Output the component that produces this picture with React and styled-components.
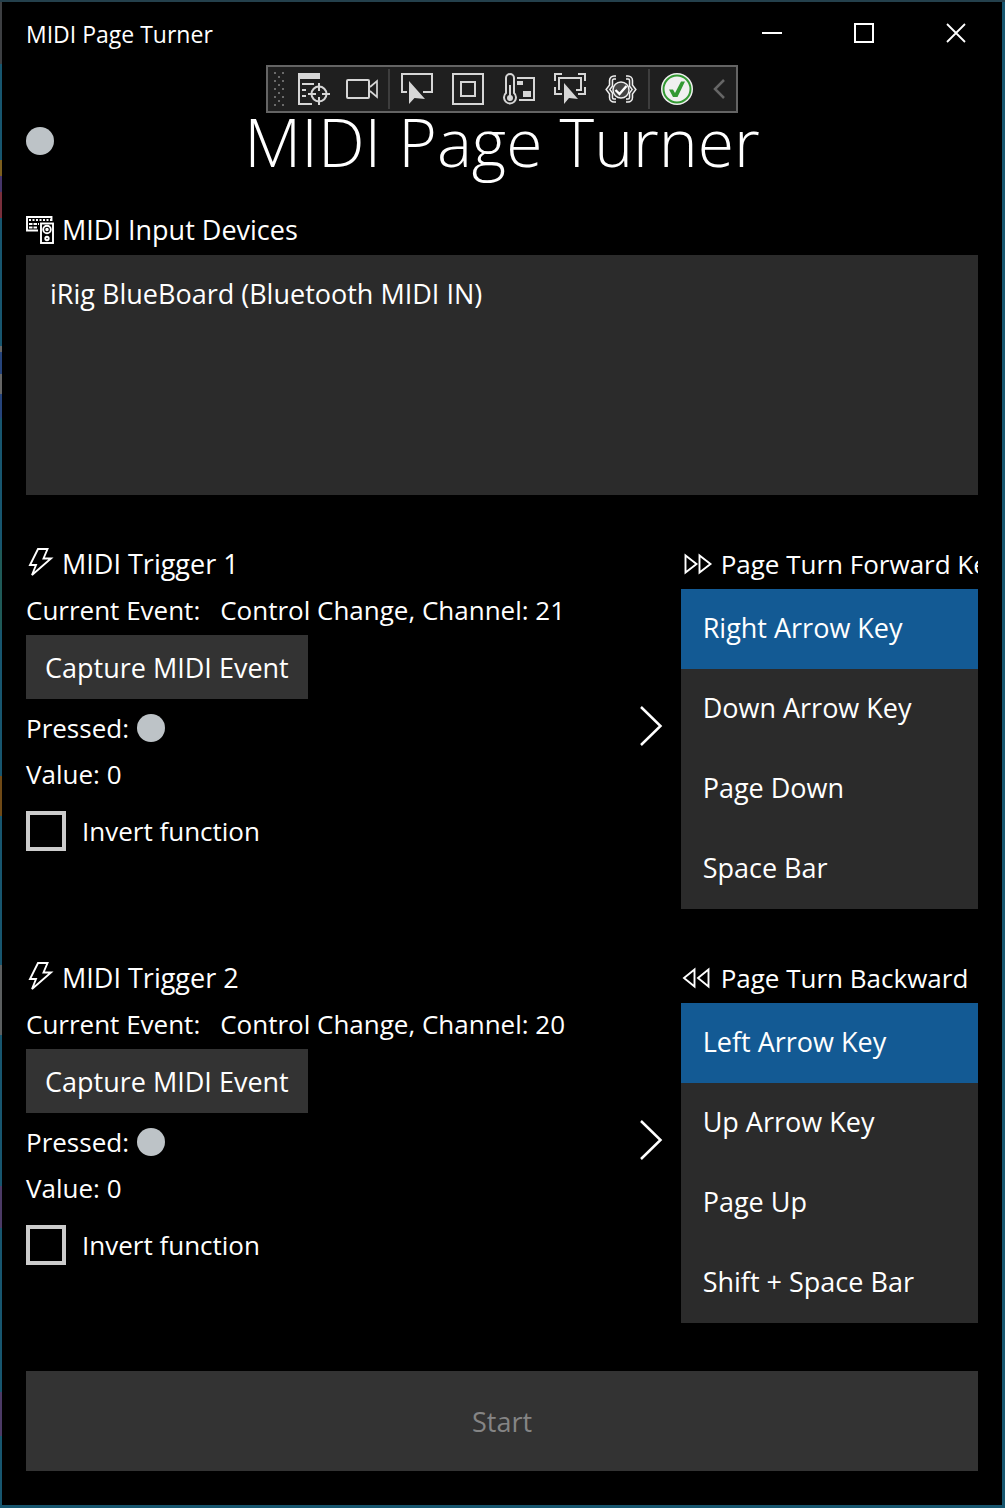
import React, { useState } from "react";
import styled, { createGlobalStyle } from "styled-components";

const GlobalStyle = createGlobalStyle`
  *, *::before, *::after { box-sizing: border-box; }
  body { margin: 0; background: #17566f; }
  button, input { font: inherit; color: inherit; }
`;

/* The sliver of wallpaper left of the window shows bands of other colours. */
const Desktop = styled.div`
  min-height: 100vh;
  padding: 2px 3px 3px 2px;
  display: flex;
  background:
    linear-gradient(
      #24404c 0 2px, #3d3f42 2px 64px, #17566f 64px 160px, #7d5f1e 160px 176px,
      #46356a 176px 192px, #7a2f3c 192px 218px, #17566f 218px 346px,
      #666 346px 352px, #26447c 352px 374px, #666 374px 394px,
      #26447c 394px 418px, #17566f 418px 550px, #1f5a58 550px 630px,
      #17566f 630px 776px, #704a16 776px 816px, #17566f 816px 965px,
      #5c5f60 965px 1035px, #17566f 1035px 1186px, #4c3a66 1186px 1228px,
      #17566f 1228px 1392px, #4c3a66 1392px 1436px, #17566f 1436px
    ) left top / 2px 100% no-repeat,
    linear-gradient(#24404c 0 2px, #17566f 2px);
  font-family: "Open Sans", "Noto Sans", sans-serif;
  font-size: 27px;
  line-height: 40px;
  color: #fff;
`;

const Window = styled.main`
  position: relative;
  flex: 1;
  min-width: 0;
  background: #000;
`;

const TitleBar = styled.header`
  display: flex;
  align-items: center;
  height: 62px;
  padding-left: 24px;
  font-size: 23px;
`;

const WindowTitle = styled.span`
  flex: 1;
  padding-top: 2px;
`;

const CaptionButton = styled.button`
  display: flex;
  align-items: center;
  justify-content: center;
  width: 92px;
  height: 62px;
  padding: 0;
  border: 0;
  background: transparent;
`;

const DebugBar = styled.div`
  position: absolute;
  top: 63px;
  left: 50%;
  transform: translateX(-50%);
  display: flex;
  align-items: center;
  width: 472px;
  height: 48px;
  border: 2px solid #646464;
  background: #1f1f1f;
`;

const Grip = styled.span`
  display: flex;
  justify-content: center;
  width: 22px;
`;

const ToolGroup = styled.div`
  display: flex;
  gap: ${(p) => p.$gap || 0}px;
`;

const ToolButton = styled.button`
  display: flex;
  align-items: center;
  justify-content: center;
  width: ${(p) => p.$width || 50}px;
  height: 44px;
  padding: 0;
  border: 0;
  background: transparent;
`;

const ToolSeparator = styled.span`
  width: 2px;
  height: 40px;
  margin: 0 2px;
  background: #3d3d3d;
`;

const Content = styled.div`
  display: flex;
  flex-direction: column;
  padding: 29px 24px 34px;
`;

const Hero = styled.div`
  display: grid;
  grid-template-columns: 28px 1fr 28px;
  align-items: center;
  margin-bottom: 20px;
`;

const HeroTitle = styled.h1`
  margin: 0;
  font-size: 66px;
  line-height: 96px;
  font-weight: 300;
  text-align: center;
  white-space: nowrap;
`;

const Dot = styled.span`
  display: block;
  width: 28px;
  height: 28px;
  border-radius: 50%;
  background: #bdc3c7;
`;

const Sections = styled.div`
  display: flex;
  flex-direction: column;
  gap: 48px;
`;

const Heading = styled.h2`
  display: flex;
  align-items: center;
  gap: 8px;
  height: 46px;
  margin: 0;
  padding-bottom: 4px;
  overflow: hidden;
  font-size: ${(p) => (p.$compact ? 26 : 27)}px;
  font-weight: 400;
  white-space: nowrap;

  svg { flex: none; }
`;

const List = styled.ul`
  min-height: ${(p) => p.$minHeight || 0}px;
  margin: 0;
  padding: 0;
  list-style: none;
  background: #2b2b2b;
`;

const ListButton = styled.button`
  display: block;
  width: 100%;
  height: 80px;
  padding: 0 ${(p) => p.$inset}px 2px;
  border: 0;
  background: ${(p) => (p.$selected ? "#135a94" : "transparent")};
  text-align: left;
`;

const TriggerGrid = styled.section`
  display: grid;
  grid-template-columns: 2fr 60px 1fr;
`;

const Column = styled.div`
  min-width: 0;
`;

const ChevronCell = styled.div`
  display: flex;
  align-items: center;
  justify-content: center;
`;

const Line = styled.div`
  display: flex;
  align-items: center;
  gap: ${(p) => p.$gap || 8}px;
  height: 46px;
  padding-bottom: 4px;
  font-size: 26px;
  white-space: nowrap;
`;

const CaptureButton = styled.button`
  display: block;
  height: 64px;
  margin-bottom: 8px;
  padding: 2px 19px 0;
  border: 0;
  background: #333;
`;

const CheckLabel = styled.label`
  display: flex;
  align-items: center;
  gap: 16px;
  height: 64px;
  font-size: 26px;
`;

const CheckBox = styled.input`
  appearance: none;
  width: 40px;
  height: 40px;
  margin: 0;
  border: 4px solid #ccc;
  background: transparent;

  &:checked { background: #135a94; }
`;

const StartButton = styled.button`
  height: 100px;
  padding: 2px 0 0;
  border: 0;
  background: #333;

  &:disabled { color: #858585; }
`;

const ink = "#d6d6d6";

const GripIcon = () => (
  <svg width="10" height="34" fill="#6a6a6a" aria-hidden="true">
    {[0, 8, 16, 24, 32].map((y) => (
      <React.Fragment key={y}>
        <rect x="0" y={y} width="2" height="2" />
        <rect x="8" y={y} width="2" height="2" />
        {y < 32 && <rect x="4" y={y + 4} width="2" height="2" />}
      </React.Fragment>
    ))}
  </svg>
);

const Icon = ({ children }) => (
  <svg width="32" height="32" viewBox="0 0 32 32" fill="none" stroke={ink} strokeWidth="2" aria-hidden="true">
    {children}
  </svg>
);

const VisualTreeIcon = () => (
  <Icon>
    <path d="M0 0h22v6H0z" fill={ink} stroke="none" />
    <path d="M1 0v31h13M4 11h12M4 17h4M4 23h4" />
    <circle cx="21" cy="21" r="7.5" />
    <path d="M21 10v8M21 24v8M10 21h8M24 21h8" />
  </Icon>
);

const CameraIcon = () => (
  <Icon>
    <rect x="1" y="7" width="22" height="18" rx="1" />
    <path d="M24 14l7-6v16l-7-6" strokeWidth="1.7" />
  </Icon>
);

const SelectElementIcon = () => (
  <Icon>
    <path d="M6 19H1V1h30v18h-9" />
    <path d="M8 8v23l5.500-6L24 26z" fill={ink} stroke="none" />
  </Icon>
);

const LayoutIcon = () => (
  <Icon>
    <rect x="1" y="1" width="30" height="30" />
    <rect x="9" y="9" width="14" height="14" />
  </Icon>
);

const ThermometerIcon = () => (
  <Icon>
    <path d="M3 20V5a4 4 0 0 1 8 0v15a6 6 0 1 1-8 0z" />
    <circle cx="7" cy="25" r="3" fill={ink} stroke="none" />
    <path d="M7 12v13M14 5h17v22H16" />
    <path d="M14 8h6v4h-6zM20 18h8v6h-8z" fill={ink} stroke="none" />
  </Icon>
);

const TrackFocusIcon = () => (
  <Icon>
    <path d="M1 8V1h7M24 1h7v7M1 14v7h7M31 14v7h-7" />
    <path d="M5 17V5h22v12h-5" />
    <path d="M10 10v21l5-6 9 1z" fill={ink} stroke="none" />
  </Icon>
);

const HotReloadIcon = () => (
  <Icon>
    <path
      d="M11 4.500H9a3 3 0 0 0-3 3v5L3 16.500l3 4v4a3 3 0 0 0 3 3h2M21 4.500h2a3 3 0 0 1 3 3v5l3 4-3 4v4a3 3 0 0 1-3 3h-2"
      stroke="#f0f0f0"
      strokeWidth="4.500"
    />
    <path
      d="M11 4.500H9a3 3 0 0 0-3 3v5L3 16.500l3 4v4a3 3 0 0 0 3 3h2M21 4.500h2a3 3 0 0 1 3 3v5l3 4-3 4v4a3 3 0 0 1-3 3h-2"
      stroke="#333"
      strokeWidth="1.500"
    />
    <circle cx="16" cy="17" r="8" stroke="#eee" fill="#444" strokeWidth="1.500" />
    <path d="M10.500 17l4 4 7-8" stroke="#fff" strokeWidth="2.400" />
  </Icon>
);

const StatusOkIcon = () => (
  <Icon>
    <circle cx="16" cy="16" r="16" fill="#f0f0f0" stroke="none" />
    <circle cx="16" cy="16" r="13.500" stroke="#339933" />
    <path d="M8 16.500h4l2 3.500L20 8.500h4L16.500 24H12z" fill="#339933" stroke="none" />
  </Icon>
);

const CollapseIcon = () => (
  <svg width="12" height="20" fill="none" stroke="#666" strokeWidth="2.500" aria-hidden="true">
    <path d="M11 1L2 10l9 9" />
  </svg>
);

const DevicesIcon = () => (
  <svg width="28" height="28" viewBox="0 0 28 28" fill="none" stroke="#fff" strokeWidth="1.900" aria-hidden="true">
    <path d="M12 14.500H1V1h24.500v4" />
    <path d="M3 4h22" strokeWidth="2" strokeDasharray="2 1.500" />
    <path d="M3 8h10M3 11.500h9" strokeDasharray="3.500 1" />
    <rect x="15" y="7.500" width="12" height="19.500" />
    <circle cx="21" cy="13.500" r="3.800" />
    <circle cx="21" cy="13.500" r="0.800" />
    <circle cx="21" cy="22.500" r="1.700" />
  </svg>
);

const BoltIcon = () => (
  <svg width="28" height="32" viewBox="0 0 28 32" fill="none" stroke="#fff" strokeWidth="1.900" aria-hidden="true">
    <path d="M12 1h9.500l-4 9.500H25L6 27l4-10H4z" />
  </svg>
);

const SkipIcon = ({ back }) => (
  <svg width="32" height="28" viewBox="0 0 32 28" fill="none" stroke="#fff" strokeWidth="1.900" aria-hidden="true">
    {back ? (
      <path d="M13.500 5.500v17L3 14zM27.500 5.500v17L17 14z" />
    ) : (
      <path d="M4.500 5.500v17L15.500 14zM18.500 5.500v17L29.500 14z" />
    )}
  </svg>
);

const ChevronIcon = () => (
  <svg width="24" height="42" fill="none" stroke="#fff" strokeWidth="2.500" aria-hidden="true">
    <path d="M2 2l19.500 19L2 40" />
  </svg>
);

function Trigger({ number, channel, title, back, keys }) {
  const [selected, setSelected] = useState(0);
  return (
    <TriggerGrid>
      <Column>
        <Heading>
          <BoltIcon />
          MIDI Trigger {number}
        </Heading>
        <Line $gap={20}>
          <span>Current Event:</span>
          <span>Control Change, Channel: {channel}</span>
        </Line>
        <CaptureButton type="button">Capture MIDI Event</CaptureButton>
        <Line>
          <span>Pressed:</span>
          <Dot />
        </Line>
        <Line>Value: 0</Line>
        <CheckLabel>
          <CheckBox type="checkbox" />
          Invert function
        </CheckLabel>
      </Column>
      <ChevronCell>
        <ChevronIcon />
      </ChevronCell>
      <Column>
        <Heading $compact>
          <SkipIcon back={back} />
          {title}
        </Heading>
        <List>
          {keys.map((key, i) => (
            <li key={key}>
              <ListButton
                type="button"
                $inset={22}
                $selected={i === selected}
                aria-pressed={i === selected}
                onClick={() => setSelected(i)}
              >
                {key}
              </ListButton>
            </li>
          ))}
        </List>
      </Column>
    </TriggerGrid>
  );
}

export default function App() {
  return (
    <Desktop>
      <GlobalStyle />
      <Window>
        <TitleBar>
          <WindowTitle>MIDI Page Turner</WindowTitle>
          <CaptionButton type="button" aria-label="Minimize">
            <svg width="20" height="20"><path d="M0 10h20" stroke="#fff" strokeWidth="2" /></svg>
          </CaptionButton>
          <CaptionButton type="button" aria-label="Maximize">
            <svg width="20" height="20"><rect x="1" y="1" width="18" height="18" fill="none" stroke="#fff" strokeWidth="2" /></svg>
          </CaptionButton>
          <CaptionButton type="button" aria-label="Close">
            <svg width="20" height="20"><path d="M1 1l18 18M19 1L1 19" stroke="#fff" strokeWidth="1.800" /></svg>
          </CaptionButton>
        </TitleBar>

        <Content>
          <Hero>
            <Dot />
            <HeroTitle>MIDI Page Turner</HeroTitle>
          </Hero>
          <Sections>
            <section>
              <Heading>
                <DevicesIcon />
                MIDI Input Devices
              </Heading>
              <List $minHeight={240}>
                <li>
                  <ListButton type="button" $inset={24}>iRig BlueBoard (Bluetooth MIDI IN)</ListButton>
                </li>
              </List>
            </section>
            <Trigger
              number={1}
              channel={21}
              title="Page Turn Forward Key"
              keys={["Right Arrow Key", "Down Arrow Key", "Page Down", "Space Bar"]}
            />
            <Trigger
              number={2}
              channel={20}
              back
              title="Page Turn Backward"
              keys={["Left Arrow Key", "Up Arrow Key", "Page Up", "Shift + Space Bar"]}
            />
            <StartButton type="button" disabled>Start</StartButton>
          </Sections>
        </Content>

        <DebugBar role="toolbar" aria-label="Debug tools">
          <Grip><GripIcon /></Grip>
          <ToolGroup>
            <ToolButton type="button" $width={48} aria-label="Go to live visual tree"><VisualTreeIcon /></ToolButton>
            <ToolButton type="button" $width={48} aria-label="Record"><CameraIcon /></ToolButton>
          </ToolGroup>
          <ToolSeparator />
          <ToolGroup $gap={1}>
            <ToolButton type="button" aria-label="Select element"><SelectElementIcon /></ToolButton>
            <ToolButton type="button" aria-label="Display layout adorners"><LayoutIcon /></ToolButton>
            <ToolButton type="button" aria-label="Binding failures"><ThermometerIcon /></ToolButton>
            <ToolButton type="button" aria-label="Track focused element"><TrackFocusIcon /></ToolButton>
            <ToolButton type="button" aria-label="Hot reload settings"><HotReloadIcon /></ToolButton>
          </ToolGroup>
          <ToolSeparator />
          <ToolButton type="button" aria-label="Hot reload status"><StatusOkIcon /></ToolButton>
          <ToolButton type="button" $width={34} aria-label="Collapse toolbar"><CollapseIcon /></ToolButton>
        </DebugBar>
      </Window>
    </Desktop>
  );
}
